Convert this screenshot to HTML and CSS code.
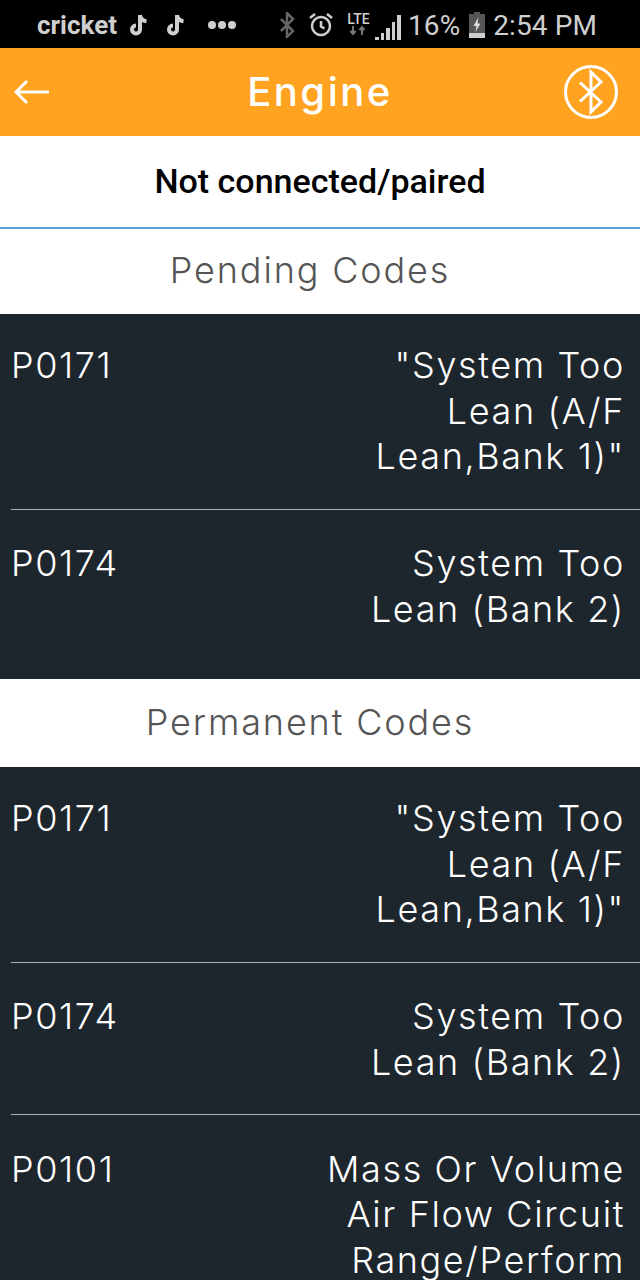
FILE: index.html
```html
<!DOCTYPE html>
<html>

<head>
    <meta charset="UTF-8">
    <meta name="viewport" content="width=device-width, initial-scale=1.0">
    <title>Engine</title>
    <link rel="stylesheet" href="styles.css">
</head>

<body>
    <div class="statusBar">
        <div class="statusLeft">
            <span class="carrier">cricket</span>
            <svg class="tiktok" viewBox="0 0 20 24"><path d="M11 2v14.5a4 4 0 1 1-4-4M11 2c.4 3.6 2.6 5.8 6.5 6.2"/></svg>
            <svg class="tiktok" viewBox="0 0 20 24"><path d="M11 2v14.5a4 4 0 1 1-4-4M11 2c.4 3.6 2.6 5.8 6.5 6.2"/></svg>
            <span class="dots"><i></i><i></i><i></i></span>
        </div>
        <div class="statusRight">
            <svg class="btSmall" viewBox="0 0 16 26"><path d="M2 7l12 12-6 6V1l6 6L2 19"/></svg>
            <svg class="alarm" viewBox="0 0 26 26"><circle cx="13" cy="14" r="9"/><path d="M13 9v5.5l3.5 2M2 6l5-4M24 6l-5-4"/></svg>
            <div class="lte"><span>LTE</span><svg viewBox="0 0 20 9"><path d="M5 0v8M2.500 5l2.500 3 2.500-3M14 9V1M11.500 4L14 1l2.500 3"/></svg></div>
            <div class="signal"><i class="s1"></i><i class="s2"></i><i class="s3"></i><i class="s4"></i><i class="s5"></i></div>
            <span class="pct">16%</span>
            <svg class="battery" viewBox="0 0 16 26"><path class="batBody" d="M5 0h6v2h5v24H0V2h5z"/><path class="batLevel" d="M0 21h16v5H0z"/><path class="batBolt" d="M9.500 5L4.500 14h3l-1 6 5-8.500h-3z"/></svg>
            <span class="clock">2:54 PM</span>
        </div>
    </div>

    <div class="toolbar">
        <svg class="backIcon" viewBox="0 0 36 26"><path d="M35 13H2M13 2L2 13l11 11"/></svg>
        <div class="toolbarTitle">Engine</div>
        <svg class="btIcon" viewBox="0 0 54 54"><circle cx="27" cy="27" r="25.500"/><path d="M16 17.500L37 37 27 47V7l10 10-21 19.500"/></svg>
    </div>

    <div class="connection">Not connected/paired</div>

    <div class="sectionTitle">Pending Codes</div>
    <div class="codeList pending">
        <div class="codeRow">
            <div class="code">P0171</div>
            <div class="desc">"System Too<br>Lean (A/F<br>Lean,Bank 1)"</div>
        </div>
        <div class="codeRow">
            <div class="code">P0174</div>
            <div class="desc">System Too<br>Lean (Bank 2)</div>
        </div>
    </div>

    <div class="sectionTitle second">Permanent Codes</div>
    <div class="codeList">
        <div class="codeRow">
            <div class="code">P0171</div>
            <div class="desc">"System Too<br>Lean (A/F<br>Lean,Bank 1)"</div>
        </div>
        <div class="codeRow">
            <div class="code">P0174</div>
            <div class="desc">System Too<br>Lean (Bank 2)</div>
        </div>
        <div class="codeRow">
            <div class="code">P0101</div>
            <div class="desc">Mass Or Volume<br>Air Flow Circuit<br>Range/Perform</div>
        </div>
    </div>
</body>

</html>
```

FILE: styles.css
```css
html,
body {
    margin: 0;
    width: 640px;
    height: 1280px;
    overflow: hidden;
    background-color: #FFFFFF;
}

body {
    font-family: Inter, "Noto Sans", sans-serif;
}

.statusBar {
    height: 48px;
    background: #000000;
    color: #CFCFCF;
    display: flex;
    justify-content: space-between;
    align-items: center;
    padding: 2px 43px 0 37px;
    box-sizing: border-box;
}

.statusLeft,
.statusRight {
    display: flex;
    align-items: center;
}

.carrier {
    font-family: Roboto, sans-serif;
    font-weight: 700;
    font-size: 26px;
    margin-right: 12px;
}

.tiktok {
    width: 20px;
    height: 24px;
    margin-right: 17px;
    fill: none;
    stroke: #CFCFCF;
    stroke-width: 4;
}

.dots {
    display: flex;
    gap: 2px;
    margin-left: 5px;
}

.dots i {
    width: 8px;
    height: 8px;
    border-radius: 50%;
    background: #CFCFCF;
}

.btSmall {
    width: 16px;
    height: 26px;
    fill: none;
    stroke: #666666;
    stroke-width: 2.500;
    margin-right: 13px;
}

.alarm {
    width: 26px;
    height: 26px;
    fill: none;
    stroke: #CFCFCF;
    stroke-width: 2.500;
    margin-right: 12px;
}

.lte {
    width: 24px;
    display: flex;
    flex-direction: column;
    align-items: center;
    font-family: Roboto, sans-serif;
    font-size: 14px;
    font-weight: 500;
    line-height: 14px;
    margin: -4px 5px 0 0;
}

.lte svg {
    width: 20px;
    height: 9px;
    fill: none;
    stroke: #777777;
    stroke-width: 2;
}

.signal {
    display: flex;
    align-items: flex-end;
    gap: 2px;
    height: 27px;
    margin-right: 7px;
    margin-top: 2px;
}

.signal i {
    width: 3.500px;
    background: #CFCFCF;
}

.s1 { height: 3px; }
.s2 { height: 7px; }
.s3 { height: 12px; }
.s4 { height: 18px; }
.s5 { height: 25px; }

.pct,
.clock {
    font-family: Roboto, sans-serif;
    font-size: 28px;
    letter-spacing: 0.1px;
}

.battery {
    width: 16px;
    height: 26px;
    margin: 0 8px 0 9px;
}

.batBody { fill: #555555; }
.batLevel { fill: #CFCFCF; }
.batBolt { fill: #DDDDDD; }

.toolbar {
    height: 88px;
    background: #FFA320;
    display: flex;
    justify-content: space-between;
    align-items: center;
    padding: 0 22px 0 14px;
    box-sizing: border-box;
    position: relative;
}

.backIcon {
    width: 36px;
    height: 26px;
    fill: none;
    stroke: #FFFFFF;
    stroke-width: 3;
}

.toolbarTitle {
    position: absolute;
    left: 0;
    right: 0;
    text-align: center;
    font-size: 40px;
    font-weight: 500;
    letter-spacing: 2.500px;
    line-height: 86px;
    color: #FFFFFF;
}

.btIcon {
    width: 54px;
    height: 54px;
    fill: none;
    stroke: #FFFFFF;
    stroke-width: 3;
}

.connection {
    height: 89px;
    display: flex;
    justify-content: center;
    align-items: center;
    font-family: Roboto, sans-serif;
    font-weight: 500;
    font-size: 34px;
    padding-bottom: 2px;
    color: #000000;
    border-bottom: 2px solid #5B9BD5;
}

.sectionTitle {
    height: 81px;
    display: flex;
    justify-content: center;
    align-items: center;
    padding: 0 20px 4px 0;
    font-size: 36px;
    font-weight: 300;
    letter-spacing: 1.850px;
    color: #555555;
}

.sectionTitle.second {
    height: 86px;
    padding-bottom: 2px;
}

.codeList {
    background: #1E262D;
    color: #FFFFFF;
    padding-left: 11px;
}

.codeList.pending {
    padding-bottom: 18px;
}

.codeRow {
    display: flex;
    justify-content: space-between;
    padding: 31.500px 15px 29px 0;
    border-bottom: 1px solid #AEB2B5;
    font-size: 36px;
    font-weight: 300;
    line-height: 45.500px;
    letter-spacing: 1.600px;
}

.codeRow:first-child {
    padding: 29px 15px 29px 0;
}

.codeRow:last-child {
    border-bottom: none;
}

.desc {
    text-align: right;
}
```
